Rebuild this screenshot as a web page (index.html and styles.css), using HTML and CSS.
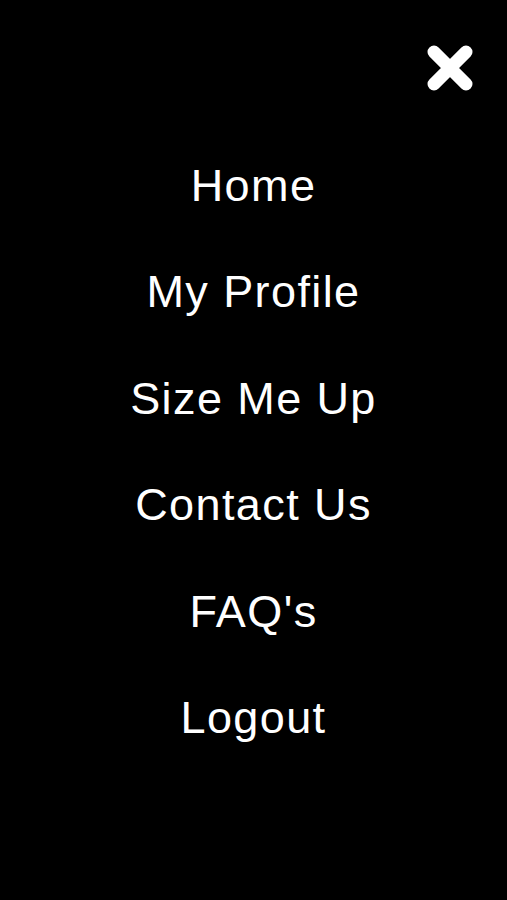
FILE: index.html
```html
<!DOCTYPE html>
<html lang="en">
<head>
    <meta charset="UTF-8">
    <meta name="viewport" content="width=device-width, initial-scale=1.0">
    <title>Menu</title>
    <link rel="stylesheet" href="styles.css">
</head>
<body>
    <div class="menu">
        <div class="close-row">
            <button class="close-btn" aria-label="Close menu">
                <svg width="48" height="48" viewBox="0 0 48 48">
                    <path d="M8 8 L40 40 M40 8 L8 40" stroke="#fff" stroke-width="13" stroke-linecap="round" fill="none"/>
                </svg>
            </button>
        </div>

        <nav>
            <ul class="nav-list">
                <li><a href="#">Home</a></li>
                <li><a href="#">My Profile</a></li>
                <li><a href="#">Size Me Up</a></li>
                <li><a href="#">Contact Us</a></li>
                <li><a href="#">FAQ's</a></li>
                <li><a href="#">Logout</a></li>
            </ul>
        </nav>
    </div>
</body>
</html>
```

FILE: styles.css
```css
* {
    margin: 0;
    padding: 0;
    box-sizing: border-box;
}

body {
    background-color: #000;
    color: #fff;
    font-family: 'Liberation Sans', Arial, sans-serif;
    min-height: 100vh;
}

.menu {
    padding: 44px 33px 0;
}

.close-row {
    display: flex;
    justify-content: flex-end;
}

.close-btn {
    background: none;
    border: none;
    width: 48px;
    height: 48px;
    display: flex;
    align-items: center;
    justify-content: center;
    cursor: pointer;
}

nav {
    margin-top: 41px;
}

.nav-list {
    list-style: none;
    text-align: center;
}

.nav-list li {
    font-size: 45px;
    line-height: 106.4px;
    letter-spacing: 1.4px;
}

.nav-list a {
    color: #fff;
    text-decoration: none;
}
```
